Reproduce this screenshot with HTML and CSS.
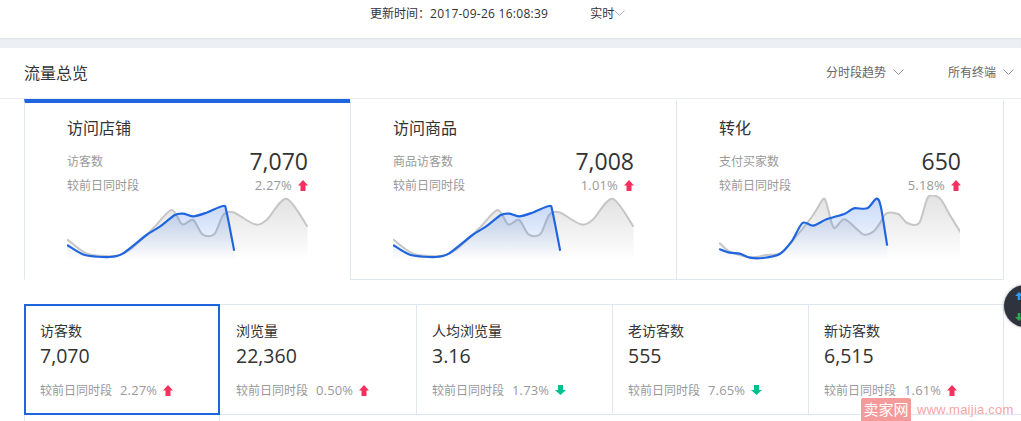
FILE: index.html
```html
<!DOCTYPE html>
<html lang="zh-CN">
<head>
  <meta charset="UTF-8">
  <title>流量总览</title>
  <link rel="stylesheet" href="styles.css">
</head>
<body>
  <div class="topbar">
    <span>更新时间：<span class="update-time">2017-09-26 16:08:39</span></span>
    <span class="realtime">实时<svg class="chevron" viewBox="0 0 11 6"><path d="M0.5 0.5L5.5 5.5L10.5 0.5"/></svg></span>
  </div>
  <div class="divider"></div>

  <div class="panel-head">
    <h2>流量总览</h2>
    <div class="filters">
      <span class="filter filter-trend">分时段趋势<svg class="chevron" viewBox="0 0 11 6"><path d="M0.5 0.5L5.5 5.5L10.5 0.5"/></svg></span>
      <span class="filter">所有终端<svg class="chevron" viewBox="0 0 11 6"><path d="M0.5 0.5L5.5 5.5L10.5 0.5"/></svg></span>
    </div>
  </div>

  <div class="cards">
    <div class="card active">
      <h3>访问店铺</h3>
      <div class="card-row"><span class="muted">访客数</span><span class="card-value">7,070</span></div>
      <div class="card-row compare"><span class="muted">较前日同时段</span><span class="rate">2.27%<svg class="arrow up" viewBox="0 0 10 11"><path d="M5 0L10 5.5H7.5V11H2.5V5.5H0Z"/></svg></span></div>
      <svg class="spark" data-chart="shop" viewBox="0 0 722 195"></svg>
    </div>
    <div class="card">
      <h3>访问商品</h3>
      <div class="card-row"><span class="muted">商品访客数</span><span class="card-value">7,008</span></div>
      <div class="card-row compare"><span class="muted">较前日同时段</span><span class="rate">1.01%<svg class="arrow up" viewBox="0 0 10 11"><path d="M5 0L10 5.5H7.5V11H2.5V5.5H0Z"/></svg></span></div>
      <svg class="spark" data-chart="goods" viewBox="0 0 722 195"></svg>
    </div>
    <div class="card">
      <h3>转化</h3>
      <div class="card-row"><span class="muted">支付买家数</span><span class="card-value">650</span></div>
      <div class="card-row compare"><span class="muted">较前日同时段</span><span class="rate">5.18%<svg class="arrow up" viewBox="0 0 10 11"><path d="M5 0L10 5.5H7.5V11H2.5V5.5H0Z"/></svg></span></div>
      <svg class="spark" data-chart="convert" viewBox="0 0 722 195"></svg>
    </div>
  </div>

  <div class="metrics">
    <div class="metric selected">
      <div class="metric-name">访客数</div>
      <div class="metric-value">7,070</div>
      <div class="metric-foot"><span class="muted">较前日同时段</span><span class="rate">2.27%<svg class="arrow up" viewBox="0 0 10 11"><path d="M5 0L10 5.5H7.5V11H2.5V5.5H0Z"/></svg></span></div>
    </div>
    <div class="metric">
      <div class="metric-name">浏览量</div>
      <div class="metric-value">22,360</div>
      <div class="metric-foot"><span class="muted">较前日同时段</span><span class="rate">0.50%<svg class="arrow up" viewBox="0 0 10 11"><path d="M5 0L10 5.5H7.5V11H2.5V5.5H0Z"/></svg></span></div>
    </div>
    <div class="metric">
      <div class="metric-name">人均浏览量</div>
      <div class="metric-value">3.16</div>
      <div class="metric-foot"><span class="muted">较前日同时段</span><span class="rate">1.73%<svg class="arrow down" viewBox="0 0 11 10"><path d="M3 0H8V5H11L5.5 10L0 5H3Z"/></svg></span></div>
    </div>
    <div class="metric">
      <div class="metric-name">老访客数</div>
      <div class="metric-value">555</div>
      <div class="metric-foot"><span class="muted">较前日同时段</span><span class="rate">7.65%<svg class="arrow down" viewBox="0 0 11 10"><path d="M3 0H8V5H11L5.5 10L0 5H3Z"/></svg></span></div>
    </div>
    <div class="metric">
      <div class="metric-name">新访客数</div>
      <div class="metric-value">6,515</div>
      <div class="metric-foot"><span class="muted">较前日同时段</span><span class="rate">1.61%<svg class="arrow up" viewBox="0 0 10 11"><path d="M5 0L10 5.5H7.5V11H2.5V5.5H0Z"/></svg></span></div>
    </div>
  </div>
  <div class="metrics-next"><div class="metric-stub"></div></div>

  <div class="float-nav">
    <svg viewBox="0 0 9 9" class="nav-up"><path d="M4.5 0L9 4.5H6V9H3V4.5H0Z"/></svg>
    <svg viewBox="0 0 9 9" class="nav-down"><path d="M3 0H6V4.5H9L4.5 9L0 4.5H3Z"/></svg>
  </div>

  <div class="watermark"><span class="wm-box">卖家网</span><span class="wm-url">www.maijia.com</span></div>

  <script src="charts.js"></script>
</body>
</html>
```

FILE: styles.css
```css
* {
  box-sizing: border-box;
}
html, body {
  height: 421px;
  overflow: hidden;
}
body {
  margin: 0;
  position: relative;
  background-color: #fff;
  color: #333;
  font-family: "Open Sans", "Noto Sans CJK SC", sans-serif;
  font-size: 12px;
}
.topbar {
  display: flex;
  align-items: center;
  gap: 42px;
  height: 38px;
  padding: 0 0 13px 370px;
  background-color: #fff;
}
.update-time {
  letter-spacing: 0.26px;
}
.realtime {
  display: flex;
  align-items: center;
}
.chevron {
  width: 11px;
  height: 6px;
  fill: none;
  stroke: #aab4c4;
  stroke-width: 1;
}
.divider {
  height: 10px;
  background-color: #eceff4;
  box-shadow: inset 0 2px 2px -1px #dfe3e9;
}
.panel-head {
  display: flex;
  justify-content: space-between;
  align-items: center;
  height: 51px;
  padding: 0 7px 2px 24px;
  border-bottom: 1px solid #e9edf2;
}
.panel-head h2 {
  margin: 0;
  font-size: 16px;
  font-weight: normal;
}
.filters {
  display: flex;
}
.filter {
  display: flex;
  align-items: center;
  color: #666;
}
.filter .chevron {
  margin-left: 7px;
  stroke: #8f9bab;
}
.filter-trend {
  margin-right: 44px;
}
.cards {
  display: grid;
  grid-template-columns: 326px 326px 328px;
  height: 181px;
  margin-left: 24px;
}
.card {
  padding: 0 42px 0 42px;
  border-top: 4px solid transparent;
  border-left: 1px solid #dfe7f0;
  border-bottom: 1px solid #dfe7f0;
}
.card:last-child {
  border-right: 1px solid #dfe7f0;
}
.card.active {
  border-top-color: #2065e0;
  border-bottom-color: transparent;
}
.card h3 {
  margin: 12px 0 0;
  height: 26px;
  font-size: 16px;
  line-height: 26px;
  font-weight: normal;
}
.card-row {
  display: flex;
  justify-content: space-between;
  align-items: center;
  height: 30px;
  margin-top: 5px;
}
.card-row.compare {
  height: 18px;
  margin-top: 0;
}
.card-value {
  font-size: 23px;
}
.muted {
  color: #999;
}
.rate {
  display: inline-flex;
  align-items: center;
  color: #999;
  font-size: 13px;
  letter-spacing: 0.15px;
}
.arrow {
  margin-left: 6px;
}
.arrow.up {
  width: 10px;
  height: 11px;
  fill: #f5305f;
}
.arrow.down {
  width: 11px;
  height: 10px;
  fill: #00bf8f;
}
.spark {
  display: block;
  width: 241px;
  height: 65px;
  margin-top: 1px;
}
.metrics {
  display: grid;
  grid-template-columns: 195px 197px 196px 196px 195px;
  height: 111px;
  margin: 24px 0 0 24px;
  border-top: 1px solid #dfe7f0;
  border-bottom: 1px solid #dfe7f0;
  border-left: 1px solid #dfe7f0;
}
.metric {
  padding: 16px 0 0 15px;
  border-right: 1px solid #dfe7f0;
}
.metric:nth-child(2) {
  padding-left: 16px;
}
.metric.selected {
  margin: -1px 0 -1px -1px;
  padding: 15px 0 0 14px;
  border: 2px solid #2065e0;
}
.metric-name {
  height: 20px;
  font-size: 14px;
  line-height: 20px;
}
.metric-value {
  height: 30px;
  font-size: 19.5px;
  line-height: 30px;
}
.metric-foot {
  display: flex;
  align-items: center;
  height: 18px;
  margin-top: 10px;
}
.metric-foot .rate {
  margin-left: 8px;
}
.metrics-next {
  height: 6px;
  margin-left: 24px;
}
.metric-stub {
  width: 196px;
  height: 100%;
  border-left: 1px solid #dfe7f0;
  border-right: 1px solid #dfe7f0;
}
.float-nav {
  position: absolute;
  left: 1004px;
  top: 285px;
  display: flex;
  flex-direction: column;
  justify-content: center;
  gap: 13px;
  width: 42px;
  height: 42px;
  padding-left: 11px;
  border-radius: 50%;
  background-color: #2e333d;
  box-shadow: 0 0 3px rgba(0, 0, 0, 0.4);
}
.float-nav svg {
  width: 8px;
  height: 8px;
}
.nav-up {
  fill: #2f9df0;
}
.nav-down {
  fill: #2aa84a;
}
.watermark {
  position: absolute;
  left: 861px;
  top: 398px;
  display: flex;
  align-items: center;
  gap: 6px;
  height: 23px;
}
.wm-box {
  width: 50px;
  height: 23px;
  background-color: #f59a9a;
  border-radius: 2px 2px 0 0;
  color: #fff;
  font-size: 15px;
  line-height: 23px;
  text-align: center;
  white-space: nowrap;
}
.wm-url {
  color: #f8a5a5;
  font-family: "Liberation Sans", sans-serif;
  font-size: 13px;
  letter-spacing: 0.25px;
  white-space: nowrap;
}
```

FILE: charts.js
```js
// sparkline points, in 1/3 px, y measured from the top of the svg
const greyShop = [[0,133],[58,175],[138,183],[188,165],[258,100],[313,45],[345,88],[378,75],[406,118],[441,118],[468,60],[498,52],[563,88],[598,75],[658,11],[721,95]];
const blueShop = [[0,150],[53,180],[128,186],[168,175],[238,120],[278,95],[323,60],[348,56],[378,64],[418,53],[468,33],[478,50],[501,167]];

const charts = {
  shop: { grey: greyShop, blue: blueShop },
  goods: { grey: greyShop, blue: blueShop },
  convert: {
    grey: [[0,143],[32,170],[92,187],[142,180],[182,175],[222,135],[282,60],[312,12],[322,25],[344,98],[377,73],[432,118],[462,110],[482,85],[502,55],[537,57],[564,84],[600,84],[627,6],[662,10],[692,60],[724,112]],
    blue: [[0,162],[32,173],[62,176],[92,188],[132,189],[182,177],[217,140],[250,84],[282,92],[322,73],[377,56],[404,40],[444,40],[472,11],[485,35],[504,152]]
  }
};

// catmull-rom through the points, kept a bit tight so peaks don't overshoot
function linePath(pts) {
  let d = `M${pts[0][0]} ${pts[0][1]}`;
  for (let i = 0; i < pts.length - 1; i++) {
    const p0 = pts[i - 1] || pts[i];
    const p1 = pts[i];
    const p2 = pts[i + 1];
    const p3 = pts[i + 2] || p2;
    const c1x = p1[0] + (p2[0] - p0[0]) / 7;
    const c1y = p1[1] + (p2[1] - p0[1]) / 7;
    const c2x = p2[0] - (p3[0] - p1[0]) / 7;
    const c2y = p2[1] - (p3[1] - p1[1]) / 7;
    d += `C${c1x.toFixed(1)} ${c1y.toFixed(1)} ${c2x.toFixed(1)} ${c2y.toFixed(1)} ${p2[0]} ${p2[1]}`;
  }
  return d;
}

document.querySelectorAll('.spark').forEach((svg) => {
  const name = svg.dataset.chart;
  const data = charts[name];
  const line = linePath(data.grey);
  const blue = linePath(data.blue);
  const greyEnd = data.grey[data.grey.length - 1][0];
  const blueEnd = data.blue[data.blue.length - 1][0];

  // blue fill is see-through, the grey line shows under it
  svg.innerHTML = `
    <defs>
      <linearGradient id="g-${name}" x1="0" y1="0" x2="0" y2="1">
        <stop offset="0" stop-color="#e2e2e2"/><stop offset="1" stop-color="#fff"/>
      </linearGradient>
      <linearGradient id="b-${name}" x1="0" y1="0" x2="0" y2="1">
        <stop offset="0" stop-color="#2065e0" stop-opacity="0.25"/><stop offset="1" stop-color="#2065e0" stop-opacity="0"/>
      </linearGradient>
    </defs>
    <path d="${line}L${greyEnd} 195L0 195Z" fill="url(#g-${name})"/>
    <path d="${line}" fill="none" stroke="#c6c6c6" stroke-width="6"/>
    <path d="${blue}L${blueEnd} 195L0 195Z" fill="url(#b-${name})"/>
    <path d="${blue}" fill="none" stroke="#2065e0" stroke-width="6.5"/>`;
});
```
